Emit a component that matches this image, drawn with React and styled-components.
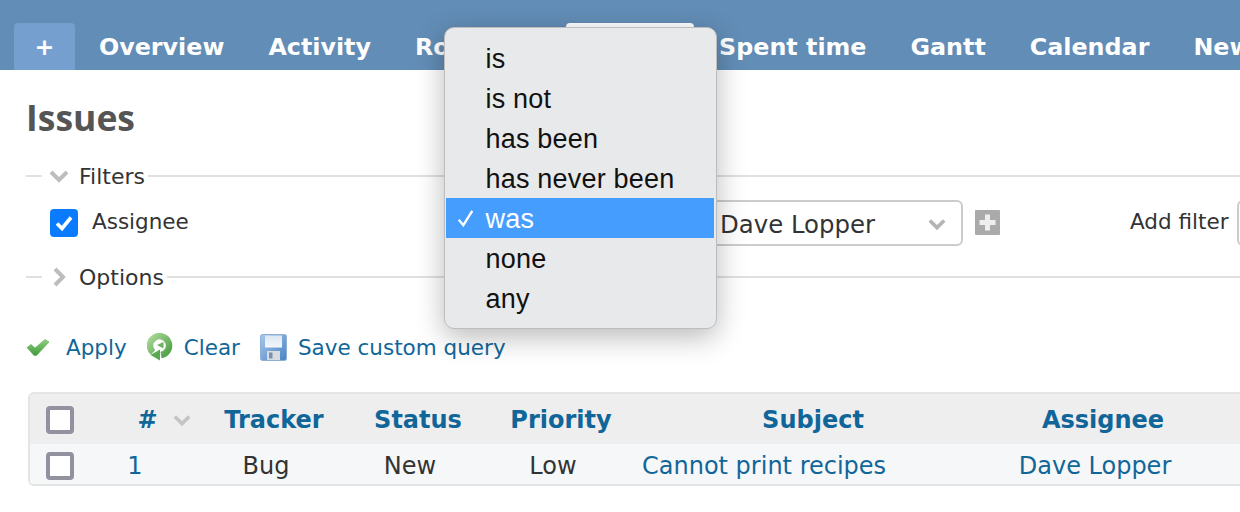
import React from 'react'
import styled, { createGlobalStyle } from 'styled-components'

const GlobalStyle = createGlobalStyle`
  html, body { margin: 0; padding: 0; background: #fff; }
  body {
    width: 1240px;
    height: 512px;
    overflow: hidden;
    font-family: "DejaVu Sans", Verdana, sans-serif;
    font-size: 23px;
    color: #333;
  }
`

const Page = styled.div`
  position: relative;
  width: 1240px;
  height: 512px;
  overflow: hidden;
`

const Header = styled.header`
  display: flex;
  align-items: flex-end;
  height: 70px;
  padding-left: 14px;
  background: #628db6;
  white-space: nowrap;
`

const Tab = styled.a`
  display: flex;
  flex: none;
  align-items: center;
  justify-content: center;
  box-sizing: border-box;
  height: 47px;
  padding: 1px ${p => p.$pad || 22}px 0;
  margin-right: ${p => p.$gap || 0}px;
  border-radius: 4px 4px 0 0;
  color: ${p => (p.$selected ? '#555' : '#fff')};
  background: ${p => (p.$selected ? '#fff' : p.$add ? '#759fcf' : 'transparent')};
  font-size: 23.8px;
  font-weight: 700;
`

const Main = styled.main`
  padding: 0 0 0 26px;
`

const Title = styled.h2`
  margin: 22px 0 0;
  height: 50px;
  font-family: "Open Sans", sans-serif;
  font-size: 35.5px;
  line-height: 50px;
  font-weight: 700;
  color: #555;
`

const Section = styled.div`
  display: flex;
  align-items: center;
  height: 30px;
  margin-top: ${p => p.$top || 0}px;
  &::before {
    content: '';
    flex: 0 0 16px;
    height: 2px;
    background: #e0e0e0;
  }
  &::after {
    content: '';
    flex: 1;
    height: 2px;
    background: #e0e0e0;
  }
`

const SectionLabel = styled.span`
  display: flex;
  align-items: center;
  gap: 10px;
  padding: 0 3px 0 7px;
  font-size: 22px;
  color: #333;
`

const Filter = styled.div`
  display: flex;
  align-items: center;
  height: 46px;
  margin: 9px 0 0 24px;
  white-space: nowrap;
`

const Check = styled.span`
  display: flex;
  flex: none;
  align-items: center;
  justify-content: center;
  width: 28px;
  height: 28px;
  border-radius: 4px;
  background: #0a7bff;
`

const FilterName = styled.span`
  flex: none;
  width: 598px;
  margin-left: 14px;
  padding-bottom: 4px;
  font-size: 21.5px;
`

const ValueSelect = styled.div`
  display: flex;
  flex: none;
  align-items: center;
  justify-content: space-between;
  box-sizing: border-box;
  width: 273px;
  height: 46px;
  padding: 2px 15px 0 28px;
  border: 2px solid #ccc;
  border-radius: 6px;
  font-size: 24.4px;
  color: #333;
`

const AddButton = styled.span`
  display: flex;
  flex: none;
  margin-left: 12px;
  padding-bottom: 2px;
`

const AddFilter = styled.span`
  flex: none;
  margin-left: 130px;
  padding-bottom: 4px;
  font-size: 21.5px;
`

const FilterSelect = styled.span`
  flex: none;
  width: 60px;
  height: 46px;
  margin-left: 9px;
  box-sizing: border-box;
  border: 2px solid #ccc;
  border-radius: 6px;
`

const Actions = styled.div`
  display: flex;
  align-items: center;
  height: 36px;
  margin-top: 37px;
`

const Action = styled.a`
  display: flex;
  align-items: center;
  gap: ${p => p.$gap}px;
  margin-right: ${p => p.$right}px;
  font-size: 21.5px;
  color: #169;
  svg { filter: blur(0.4px); }
`

const Table = styled.div`
  box-sizing: border-box;
  width: 1300px;
  margin: 27px 0 0 2px;
  border: 2px solid #e4e4e4;
  border-radius: 6px;
  overflow: hidden;
`

const Row = styled.div`
  display: grid;
  grid-template-columns: 62px 100px 148px 140px 146px 358px 222px 1fr;
  align-items: center;
  box-sizing: border-box;
  height: ${p => p.$h}px;
  padding-top: ${p => p.$top}px;
  background: ${p => p.$bg};
`

const Cell = styled.div`
  display: flex;
  align-items: center;
  justify-content: ${p => (p.$start ? 'flex-start' : 'center')};
  gap: 15px;
  white-space: nowrap;
  color: ${p => (p.$link ? '#169' : '#333')};
  font-weight: ${p => (p.$head ? 700 : 400)};
  font-size: 24px;
  padding-left: ${p => p.$left || 0}px;
  padding-right: ${p => p.$right || 0}px;
`

const Box = styled.span`
  box-sizing: border-box;
  display: block;
  width: 28px;
  height: 28px;
  margin-left: 16px;
  background: #fff;
  border: 4px solid #9191a0;
  border-radius: 4px;
`

const Menu = styled.ul`
  position: absolute;
  left: 444px;
  top: 27px;
  box-sizing: border-box;
  width: 273px;
  height: 302px;
  margin: 0;
  padding: 10px 2px 0 1px;
  list-style: none;
  background: #e8e9eb;
  border: 1px solid #bdbdbd;
  border-radius: 10px;
  box-shadow: 0 8px 28px rgba(0, 0, 0, 0.28);
  font-family: "Liberation Sans", Arial, sans-serif;
  font-size: 27px;
  letter-spacing: 0.2px;
  color: #111;
`

const Option = styled.li`
  position: relative;
  height: 40px;
  line-height: 42px;
  padding-left: 39.5px;
  color: ${p => (p.$active ? '#fff' : '#111')};
  background: ${p => (p.$active ? '#459efe' : 'transparent')};
`

const Tick = styled.svg`
  position: absolute;
  left: 11px;
  top: 11px;
`

const Chevron = ({ dir = 'down', size = 20, color = '#bdbdbd', width = 4 }) => (
  <svg width={size} height={size} viewBox="0 0 20 20" fill="none">
    <path
      d={dir === 'down' ? 'M2 6l8 8 8-8' : 'M6 2l8 8-8 8'}
      stroke={color}
      strokeWidth={width}
      strokeLinejoin="miter"
    />
  </svg>
)

const GreenCheck = () => (
  <svg width="24" height="22" viewBox="0 0 24 22">
    <defs>
      <linearGradient id="gc" x1="0" y1="0" x2="0" y2="1">
        <stop offset="0" stopColor="#8fd07f" />
        <stop offset="1" stopColor="#3f9a3c" />
      </linearGradient>
    </defs>
    <path d="M1 11.5l4-3 4 3.5L19 3.5l4 2.5-12.5 13.5h-2.5z" fill="url(#gc)" stroke="#5aa854" strokeWidth=".6" />
  </svg>
)

const GreenReload = () => (
  <svg width="26" height="28" viewBox="0 0 26 28">
    <defs>
      <linearGradient id="gr" x1="0" y1="0" x2="1" y2="1">
        <stop offset="0" stopColor="#a9d696" />
        <stop offset="1" stopColor="#4d9f45" />
      </linearGradient>
    </defs>
    <path d="M6 19.5A9.5 9.5 0 1 1 14 22" fill="none" stroke="url(#gr)" strokeWidth="6.5" />
    <path d="M13 27.5L3.5 22l9.5-5.5z" fill="#5aa850" />
    <path d="M16.5 9l-6.5 3 6.5 3.5z" fill="#6cb25f" />
  </svg>
)

const Floppy = () => (
  <svg width="27" height="27" viewBox="0 0 27 27">
    <defs>
      <linearGradient id="fl" x1="0" y1="0" x2="1" y2="1">
        <stop offset="0" stopColor="#a8c8ec" />
        <stop offset="1" stopColor="#4a82c4" />
      </linearGradient>
      <linearGradient id="fp" x1="0" y1="0" x2="0" y2="1">
        <stop offset="0" stopColor="#dbe7f5" />
        <stop offset="1" stopColor="#f4f7fb" />
      </linearGradient>
    </defs>
    <rect x=".5" y=".5" width="26" height="26" rx="2" fill="url(#fl)" stroke="#8eaed4" />
    <rect x="5" y="1.5" width="17" height="12" fill="url(#fp)" />
    <rect x="7" y="17" width="13" height="9" fill="#d8dbe0" />
    <rect x="9" y="18.5" width="3.5" height="6" fill="#7492b5" />
  </svg>
)

const tabs = [
  { label: 'Overview' },
  { label: 'Activity' },
  { label: 'Roadmap', gap: 3 },
  { label: 'Issues', selected: true, gap: 3 },
  { label: 'Spent time' },
  { label: 'Gantt' },
  { label: 'Calendar' },
  { label: 'News' },
]

const operators = ['is', 'is not', 'has been', 'has never been', 'was', 'none', 'any']

export default function App() {
  return (
    <Page>
      <GlobalStyle />
      <Header>
        <Tab $add $pad={20.5} $gap={2}>+</Tab>
        {tabs.map(t => (
          <Tab key={t.label} $gap={t.gap} $selected={t.selected}>{t.label}</Tab>
        ))}
      </Header>

      <Main>
        <Title>Issues</Title>

        <Section $top={19}>
          <SectionLabel>
            <Chevron />
            Filters
          </SectionLabel>
        </Section>

        <Filter>
          <Check>
            <svg width="20" height="18" viewBox="0 0 20 18" fill="none">
              <path d="M3 9.5l5 5 9-11" stroke="#fff" strokeWidth="3.6" />
            </svg>
          </Check>
          <FilterName>Assignee</FilterName>
          <ValueSelect>
            Dave Lopper
            <Chevron color="#b5b5b5" size={18} />
          </ValueSelect>
          <AddButton>
            <svg width="25" height="25" viewBox="0 0 25 25">
              <rect width="25" height="25" rx="1" fill="#aaa" />
              <path d="M12.5 4.5v16M4.5 12.5h16" stroke="#eee" strokeWidth="5" />
            </svg>
          </AddButton>
          <AddFilter>Add filter</AddFilter>
          <FilterSelect />
        </Filter>

        <Section $top={16}>
          <SectionLabel>
            <Chevron dir="right" />
            Options
          </SectionLabel>
        </Section>

        <Actions>
          <Action $gap={16} $right={20}><GreenCheck />Apply</Action>
          <Action $gap={11} $right={20}><GreenReload />Clear</Action>
          <Action $gap={11} $right={0}><Floppy />Save custom query</Action>
        </Actions>

        <Table>
          <Row $h={50} $top={2} $bg="#eee">
            <Cell $start><Box /></Cell>
            <Cell $head $link $left={44}>#<Chevron size={18} color="#c4c4c4" /></Cell>
            <Cell $head $link $left={16}>Tracker</Cell>
            <Cell $head $link $left={16}>Status</Cell>
            <Cell $head $link $left={16}>Priority</Cell>
            <Cell $head $link $left={16}>Subject</Cell>
            <Cell $head $link $left={16}>Assignee</Cell>
            <Cell />
          </Row>
          <Row $h={40} $top={4} $bg="#f6f7f8">
            <Cell $start><Box /></Cell>
            <Cell $link $right={14}>1</Cell>
            <Cell>Bug</Cell>
            <Cell>New</Cell>
            <Cell>Low</Cell>
            <Cell $link $start $left={16}>Cannot print recipes</Cell>
            <Cell $link>Dave Lopper</Cell>
            <Cell />
          </Row>
        </Table>
      </Main>

      <Menu>
        {operators.map(op => (
          <Option key={op} $active={op === 'was'}>
            {op === 'was' && (
              <Tick width="18" height="18" viewBox="0 0 20 20" fill="none">
                <path d="M2 12l5 6L17 2" stroke="#fff" strokeWidth="2.6" />
              </Tick>
            )}
            {op}
          </Option>
        ))}
      </Menu>
    </Page>
  )
}
